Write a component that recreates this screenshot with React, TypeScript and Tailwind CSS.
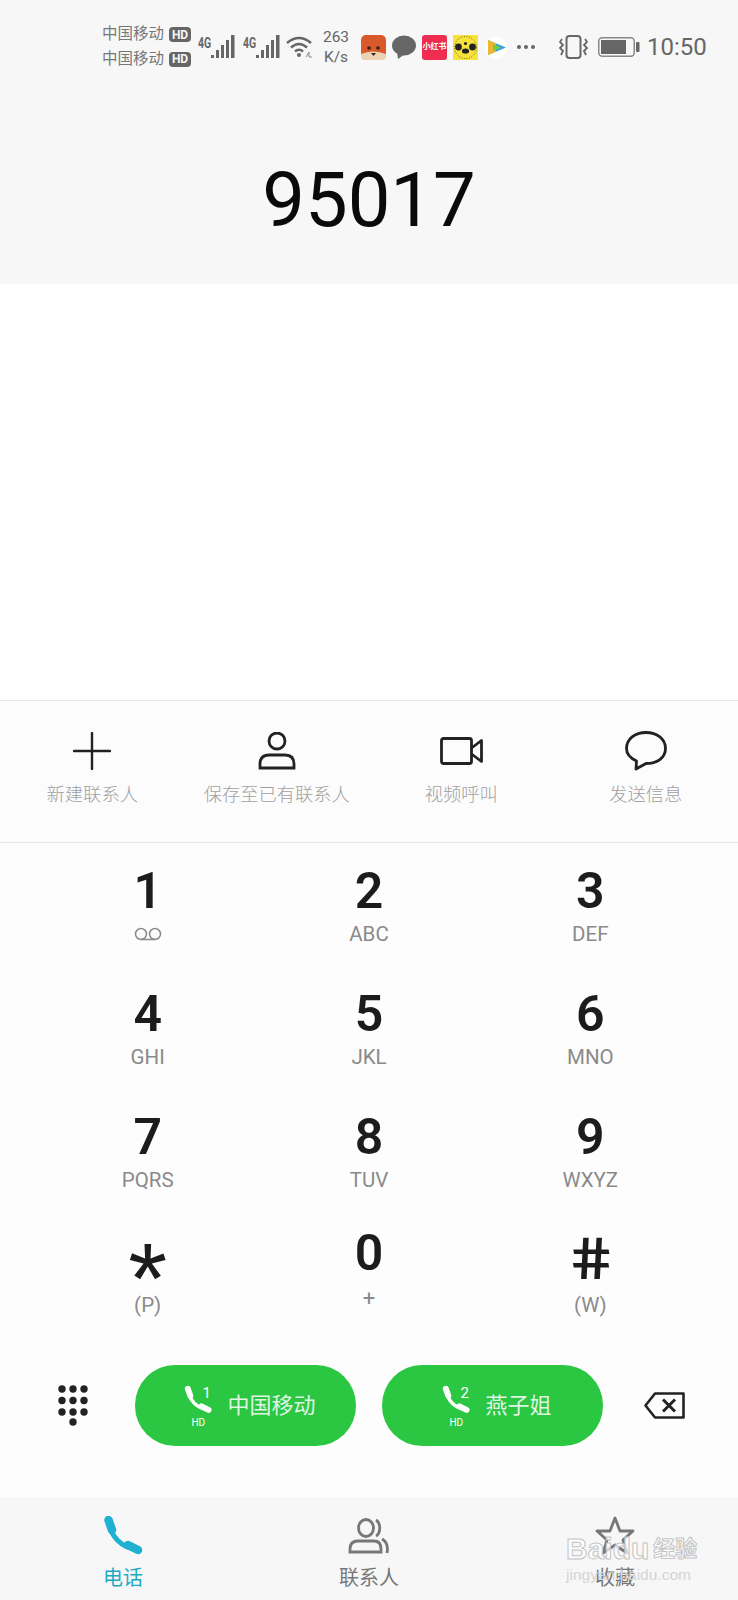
import React from "react";

const cjk = "font-['Roboto','Noto_Sans_CJK_SC',sans-serif]";

const keys = [
  { digit: "1", sub: "" },
  { digit: "2", sub: "ABC" },
  { digit: "3", sub: "DEF" },
  { digit: "4", sub: "GHI" },
  { digit: "5", sub: "JKL" },
  { digit: "6", sub: "MNO" },
  { digit: "7", sub: "PQRS" },
  { digit: "8", sub: "TUV" },
  { digit: "9", sub: "WXYZ" },
];

const Signal = () => (
  <div className="flex w-[38px] items-start">
    <span className="mt-[1px] w-[13px] origin-left scale-x-75 text-[14px] leading-[14px] font-bold text-[#666]">4G</span>
    <svg width="25" height="24" viewBox="0 0 25 24" fill="#666">
      <rect x="0" y="20" width="3" height="3" />
      <rect x="5" y="15" width="3" height="8" />
      <rect x="10" y="10" width="3" height="13" />
      <rect x="15" y="5" width="3" height="18" />
      <rect x="20" y="0" width="3.5" height="23" />
    </svg>
  </div>
);

const Wifi = () => (
  <svg width="28" height="22" viewBox="0 0 28 22" fill="none" stroke="#666" strokeWidth="2.6">
    <path d="M1 7 Q13 -3 25 7" />
    <path d="M5 11.5 Q13 4.5 21 11.5" />
    <path d="M9 15.5 Q13 12 17 15.5" />
    <circle cx="13" cy="19" r="2" fill="#666" stroke="none" />
    <path d="M20 21 L23 16 V21 H26" stroke="#888" strokeWidth="1" />
  </svg>
);

const Carrier = () => (
  <div className="flex h-[24.5px] items-center gap-[5px] text-[15.5px] text-[#777]">
    <span className={cjk}>中国移动</span>
    <span className="flex h-[15px] w-[22px] items-center justify-center rounded-[4px] bg-[#666] text-[12px] font-bold text-[#f7f7f7]">HD</span>
  </div>
);

const StatusBar = () => (
  <div className="flex h-[48px] items-center pl-[102px]">
    <div className="flex w-[96px] flex-col">
      <Carrier />
      <Carrier />
    </div>
    <Signal />
    <div className="w-[7px]" />
    <Signal />
    <div className="ml-[5px] w-[36px]">
      <Wifi />
    </div>
    <div className="w-[28px] text-center text-[15.5px] leading-[20px] text-[#666]">
      263
      <br />
      K/s
    </div>
    <div className="ml-[11px] flex items-center gap-[6px]">
      <svg width="25" height="25" viewBox="0 0 25 25">
        <rect width="25" height="25" rx="5" fill="#d9592b" />
        <path d="M0 19 Q12 14 25 19 V22 Q25 25 20 25 H5 Q0 25 0 22Z" fill="#ecd3b4" />
        <circle cx="8" cy="13" r="1.8" fill="#3a2015" />
        <circle cx="17" cy="13" r="1.8" fill="#3a2015" />
        <path d="M10 18 H15 L12.5 21Z" fill="#3a2015" />
      </svg>
      <svg width="24" height="24" viewBox="0 0 24 24" fill="#666">
        <ellipse cx="12" cy="10.5" rx="12" ry="10" />
        <path d="M5 17 L6 24 L13 19Z" />
      </svg>
      <div className="flex h-[25px] w-[25px] items-center justify-center rounded-[3px] bg-[#ef2d50] text-[8px] font-bold text-white">
        <span className={cjk}>小红书</span>
      </div>
      <svg width="25" height="25" viewBox="0 0 25 25">
        <rect width="25" height="25" fill="#f7e23b" />
        <circle cx="12.5" cy="12.5" r="11" fill="none" stroke="#2b2b10" strokeWidth="0.7" strokeDasharray="1 1.5" />
        <circle cx="5.5" cy="12" r="3.4" fill="#222" />
        <circle cx="19.5" cy="12" r="3.4" fill="#222" />
        <circle cx="12.5" cy="8.5" r="1.6" fill="#222" />
        <ellipse cx="12.5" cy="16" rx="3.6" ry="2.6" fill="#222" />
      </svg>
      <svg width="24" height="25" viewBox="0 0 24 25" className="ml-[1px]">
        <circle cx="11" cy="12.5" r="11" fill="#fff" />
        <path d="M3 5 L21 12.5 L3 20Z" fill="#2fa6dc" />
        <path d="M3 5 L11 8.5 L11 16.5 L3 20Z" fill="#f1b62f" />
        <path d="M8 9 L16 12.5 L8 16Z" fill="#7ccb3e" />
      </svg>
    </div>
    <div className="ml-[8px] flex gap-[3px]">
      <span className="h-[4px] w-[4px] rounded-full bg-[#666]" />
      <span className="h-[4px] w-[4px] rounded-full bg-[#666]" />
      <span className="h-[4px] w-[4px] rounded-full bg-[#666]" />
    </div>
    <svg width="30" height="24" viewBox="0 0 30 24" fill="none" stroke="#666" className="ml-[24px]">
      <rect x="7.5" y="1" width="14" height="22" rx="3" strokeWidth="2" />
      <path d="M3 4 L1 7 L4 10 L1 13 L4 16 L2 20" strokeWidth="1.8" />
      <path d="M26 4 L28 7 L25 10 L28 13 L25 16 L27 20" strokeWidth="1.8" />
    </svg>
    <svg width="42" height="20" viewBox="0 0 42 20" className="ml-[9px]">
      <rect x="0.75" y="0.75" width="35.5" height="18.5" rx="3.5" fill="none" stroke="#888" strokeWidth="1.5" />
      <rect x="3" y="3" width="25" height="14" fill="#666" />
      <rect x="38" y="5" width="3.5" height="10" rx="1" fill="#666" />
    </svg>
    <span className="ml-[7px] font-['Roboto',sans-serif] text-[24px] leading-[28px] text-[#666]">10:50</span>
  </div>
);

const iconClass = "h-[40px] flex items-center justify-center";

const actions = [
  {
    label: "新建联系人",
    icon: (
      <svg width="38" height="38" viewBox="0 0 38 38" stroke="#222" strokeWidth="2.4" strokeLinecap="round">
        <path d="M19 1 V37 M1 19 H37" />
      </svg>
    ),
  },
  {
    label: "保存至已有联系人",
    icon: (
      <svg width="38" height="38" viewBox="0 0 38 38" fill="none" stroke="#222" strokeWidth="2.8">
        <ellipse cx="19" cy="9" rx="8" ry="8" />
        <path d="M2 36 V32 Q2 23 11 23 H27 Q36 23 36 32 V36Z" />
      </svg>
    ),
  },
  {
    label: "视频呼叫",
    icon: (
      <svg width="43" height="28" viewBox="0 0 43 28" fill="none" stroke="#222" strokeWidth="2.8" strokeLinejoin="round">
        <rect x="1.5" y="1.5" width="30" height="25" rx="2" />
        <path d="M31.5 11 L41.5 3.5 V24.5 L31.5 17" />
      </svg>
    ),
  },
  {
    label: "发送信息",
    icon: (
      <svg width="42" height="40" viewBox="0 0 42 40" fill="none" stroke="#222" strokeWidth="2.8" strokeLinejoin="round">
        <path d="M21 1.5 C32 1.5 40.5 8 40.5 17.5 C40.5 27 32 32.5 21 32.5 L11 38 L11.5 30 C5 27 1.5 23 1.5 17.5 C1.5 8 10 1.5 21 1.5Z" />
      </svg>
    ),
  },
];

const Handset = ({ className = "", color = "#fff", w = 28, h = 30 }: { className?: string; color?: string; w?: number; h?: number }) => (
  <svg width={w} height={h} viewBox="0 0 40 40" fill="none" className={className} strokeLinecap="round">
    <path d="M7 7 C7 20 19 32 33 33" stroke={color} strokeWidth="5" />
    <path d="M5.5 4 L9 14" stroke={color} strokeWidth="8.5" />
    <path d="M25 29 L35 34" stroke={color} strokeWidth="8.5" />
  </svg>
);

const CallButton = ({ index, label }: { index: string; label: string }) => (
  <div className="flex h-[81px] w-[221px] items-center justify-center rounded-[40px] bg-[#2cc742] pl-[9px] text-white">
    <div className="relative mr-[15px] h-[44px] w-[28px]">
      <Handset className="mt-[1px]" />
      <span className="absolute top-[1px] left-[18px] font-['Roboto',sans-serif] text-[15px] leading-[16px]">{index}</span>
      <span className="absolute bottom-[-1px] left-[7px] font-['Roboto',sans-serif] text-[10px] leading-[12px]">HD</span>
    </div>
    <span className={`${cjk} text-[22px] leading-[30px] text-[#dff5e2]`}>{label}</span>
  </div>
);

const Key = ({ digit, sub }: { digit: string; sub: string }) => (
  <div className="flex h-[123px] flex-col items-center">
    <span className="h-[56px] text-[50px] leading-[56px] font-semibold text-[#1c1c1c]">{digit}</span>
    {sub ? (
      <span className="h-[30px] text-[20.5px] leading-[30px] text-[#8a8a8a]">{sub}</span>
    ) : (
      <svg width="30" height="30" viewBox="0 0 30 30" fill="none" stroke="#8a8a8a" strokeWidth="1.5">
        <circle cx="8" cy="15" r="5.5" />
        <circle cx="22" cy="15" r="5.5" />
        <path d="M8 20.5 H22" />
      </svg>
    )}
  </div>
);

const DialDots = () => (
  <svg width="30" height="41" viewBox="0 0 30 41" fill="#222">
    {[0, 1, 2].map((r) =>
      [4, 15, 26].map((x) => <circle key={`${r}-${x}`} cx={x} cy={4 + r * 11.5} r="3.7" />)
    )}
    <circle cx="15" cy="37" r="3.7" />
  </svg>
);

export default function App() {
  return (
    <div className="relative h-[1600px] w-[738px] overflow-hidden bg-white font-['Roboto',sans-serif]">
      <div className="h-[284px] bg-[#f7f7f7] pt-[23px]">
        <StatusBar />
        <div className="mt-[84px] text-center text-[76px] leading-[90px] text-[#0a0a0a]">95017</div>
      </div>
      <div className="h-[416px] bg-white" />

      <div className="h-[143px] border-y border-[#e6e6e6] bg-[#fcfcfc]">
        <div className="grid grid-cols-4 pt-[30px]">
          {actions.map((a) => (
            <div key={a.label} className="flex flex-col items-center">
              <div className={iconClass}>{a.icon}</div>
              <span className={`${cjk} mt-[11px] text-[18.3px] leading-[26px] font-light text-[#a0a0a0]`}>{a.label}</span>
            </div>
          ))}
        </div>
      </div>

      <div className="grid grid-cols-3 bg-[#fdfdfd] px-[37px] pt-[20px]">
        {keys.map((k) => (
          <Key key={k.digit} digit={k.digit} sub={k.sub} />
        ))}
        <div className="flex h-[123px] flex-col items-center">
          <span className="h-[56px] translate-y-[18px] font-['Liberation_Sans',sans-serif] text-[100px] leading-[56px] text-[#1c1c1c]">*</span>
          <span className="h-[30px] translate-y-[2px] text-[20.5px] leading-[30px] text-[#8a8a8a]">(P)</span>
        </div>
        <div className="flex h-[123px] flex-col items-center">
          <span className="h-[56px] -translate-y-[7px] text-[50px] leading-[56px] font-semibold text-[#1c1c1c]">0</span>
          <span className="h-[30px] -translate-y-[4px] text-[22px] leading-[30px] text-[#8a8a8a]">+</span>
        </div>
        <div className="flex h-[123px] flex-col items-center">
          <span className="h-[56px] -translate-y-[1px] skew-x-[8deg] scale-x-120 text-[58px] leading-[56px] font-medium text-[#1c1c1c]">#</span>
          <span className="h-[30px] translate-y-[2px] text-[20.5px] leading-[30px] text-[#8a8a8a]">(W)</span>
        </div>
      </div>

      <div className="flex h-[142px] bg-[#fdfdfd] pt-[10px]">
        <div className="flex h-[81px] w-[135px] items-center justify-center pl-[10px]">
          <DialDots />
        </div>
        <div className="flex gap-[26px]">
          <CallButton index="1" label="中国移动" />
          <CallButton index="2" label="燕子姐" />
        </div>
        <div className="flex h-[81px] w-[135px] items-center justify-center pr-[12px]">
          <svg width="41" height="27" viewBox="0 0 41 27" fill="none" stroke="#222" strokeWidth="2.6" strokeLinejoin="round">
            <path d="M11 1.5 H39.5 V25.5 H11 L1.5 13.5Z" />
            <path d="M19 7.5 L31 19.5 M31 7.5 L19 19.5" strokeWidth="3" />
          </svg>
        </div>
      </div>

      <div className="grid h-[103px] grid-cols-3 bg-[#f7f7f7] pt-[19px]">
        <div className="flex flex-col items-center">
          <div className="flex h-[40px] items-center">
            <Handset color="#1fb0d2" w={40} h={40} />
          </div>
          <span className={`${cjk} mt-[8px] text-[20px] leading-[28px] text-[#1ea9c2]`}>电话</span>
        </div>
        <div className="flex flex-col items-center">
          <div className="flex h-[40px] items-center">
            <svg width="42" height="36" viewBox="0 0 42 36" fill="none" stroke="#777" strokeWidth="2.8">
              <ellipse cx="18" cy="10" rx="7.5" ry="8.5" />
              <path d="M28 2 C33 5 33 15 28 18" />
              <path d="M2 34 V31 Q2 23 10 23 H26 Q33 23 33 31 V34Z" />
              <path d="M34 21 Q41 25 39 35" />
            </svg>
          </div>
          <span className={`${cjk} mt-[8px] text-[20px] leading-[28px] text-[#777]`}>联系人</span>
        </div>
        <div className="flex flex-col items-center">
          <div className="flex h-[40px] items-center">
            <svg width="40" height="40" viewBox="0 0 40 40" fill="none" stroke="#777" strokeWidth="2.8" strokeLinejoin="round">
              <path d="M20 2 L25 15 L38 15 L28 24 L32 37 L20 29 L8 37 L12 24 L2 15 L15 15Z" />
            </svg>
          </div>
          <span className={`${cjk} mt-[8px] text-[20px] leading-[28px] text-[#777]`}>收藏</span>
        </div>
      </div>

      {/* baidu watermark */}
      <div className="absolute top-[1534px] left-[566px] flex h-[30px] items-center font-['Liberation_Sans','Noto_Sans_CJK_SC',sans-serif] text-[30px] leading-[30px] font-bold text-white/70 [-webkit-text-stroke:1px_#c4c4c4]">
        <span>Bai</span>
        <span>du</span>
        <span className="ml-[4px] text-[22px]">经验</span>
      </div>
      <div className="absolute top-[1566px] left-[566px] font-['Liberation_Sans',sans-serif] text-[15.5px] leading-[18px] text-[#d4d4d4]">jingyan.baidu.com</div>
    </div>
  );
}
